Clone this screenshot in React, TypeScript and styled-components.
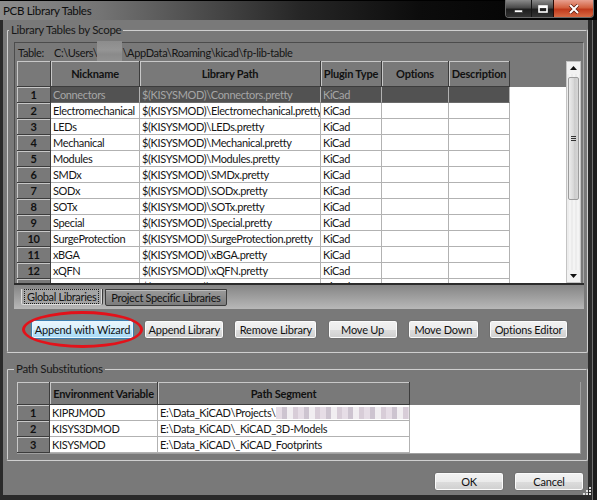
import React from "react";
import styled, { createGlobalStyle } from "styled-components";

const GlobalStyle = createGlobalStyle`
  html, body { margin: 0; padding: 0; }
  body {
    width: 597px; height: 500px; overflow: hidden; background: #1f1f1f;
    font-family: Lato, "Liberation Sans", "DejaVu Sans", sans-serif;
    font-size: 11px; letter-spacing: -0.35px; color: #111;
  }
  * { box-sizing: border-box; }
`;

const Window = styled.div`
  position: relative;
  width: 597px;
  height: 500px;
  display: flex;
  flex-direction: column;
  background: linear-gradient(90deg, #2a2a2a 0, #2a2a2a 592px, #707070 592px, #707070 593px, #1c1c1c 593px);
`;

const TitleBar = styled.div`
  flex: none;
  height: 20px;
  display: flex;
  justify-content: space-between;
  align-items: flex-start;
  padding: 0 3px;
  border-top: 1px solid #000;
  background: linear-gradient(90deg, #8c8c8c 0px, #747474 100px, #4c4c4c 200px, #262626 300px, #0c0c0c 420px, #000 597px);
`;

const TitleText = styled.div`
  font-size: 11.5px;
  letter-spacing: -0.3px;
  line-height: 19px;
  color: #0e0e0e;
`;

const WinBtns = styled.div`
  display: flex;
  height: 18px;
  margin-top: -1px;
  border: 1px solid #6a6a6a;
  border-top: none;
  border-radius: 0 0 4px 4px;
  overflow: hidden;
`;

const WinBtn = styled.div<{ $w: number; $close?: boolean }>`
  width: ${(p) => p.$w}px;
  display: flex;
  align-items: center;
  justify-content: center;
  border-left: ${(p) => (p.$close ? "1px solid #2a0a04" : "1px solid #151515")};
  background: ${(p) =>
    p.$close
      ? "linear-gradient(#e8a090 0%, #d2603f 45%, #c03a1c 55%, #d86a44 100%)"
      : "linear-gradient(#8a8a8a 0%, #4a4a4a 45%, #1e1e1e 55%, #333 100%)"};
  &:first-child { border-left: none; }
`;

const Client = styled.div`
  flex: 1;
  display: flex;
  flex-direction: column;
  margin: 0 9px 5px 3px;
  padding: 3px 0 0 3px;
  background: #797979;
`;

const Group = styled.fieldset<{ $mt?: number }>`
  margin: ${(p) => p.$mt ?? 0}px 0 0 0;
  padding: 0;
  min-width: 0;
  border: 2px groove #cfcfcf;
  border-radius: 2px;
`;

const Legend = styled.legend<{ $indent: number }>`
  margin-left: ${(p) => p.$indent}px;
  padding: 0 2px;
  line-height: 14px;
  font-size: 11.5px;
  letter-spacing: -0.3px;
  color: #181818;
`;

const GroupBody = styled.div<{ $pad: string }>`
  display: flex;
  flex-direction: column;
  padding: ${(p) => p.$pad};
`;

const Page = styled.div`
  display: flex;
  flex-direction: column;
  border-top: 1px solid #4c4c4c;
  border-left: 1px solid #4c4c4c;
  border-right: 1px solid #a8a8a8;
  padding: 0 2px;
`;

const TableLine = styled.div`
  height: 18px;
  display: flex;
  align-items: center;
  padding-left: 1px;
  white-space: nowrap;
  color: #141414;
`;

const TableLabel = styled.span`
  margin-right: 10px;
`;

const Smudge = styled.span<{ $w: number; $h: number; $tint?: boolean }>`
  display: inline-block;
  flex: none;
  width: ${(p) => p.$w}px;
  height: ${(p) => p.$h}px;
  background: ${(p) =>
    p.$tint
      ? "repeating-linear-gradient(90deg, #e6dde6 0 6px, #cdc4d0 6px 11px, #f1eef1 11px 17px, #d8cdd8 17px 22px)"
      : "linear-gradient(#8c8c8c, #959595 40%, #8a8a8a 60%, #929292)"};
`;

const GridWrap = styled.div`
  height: 222px;
  display: flex;
  overflow: hidden;
`;

const GridMain = styled.div`
  flex: 1;
  display: flex;
  flex-direction: column;
  overflow: hidden;
  background: #fff;
`;

const Row = styled.div<{ $h: number }>`
  flex: none;
  height: ${(p) => p.$h}px;
  display: flex;
`;

const HeadCell = styled.div<{ $w?: number }>`
  flex: ${(p) => (p.$w ? `0 0 ${p.$w}px` : "1 1 auto")};
  display: flex;
  align-items: center;
  justify-content: center;
  background: #797979;
  border-right: 1px solid #3c3c3c;
  border-bottom: 1px solid #3c3c3c;
  box-shadow: inset 1px 1px 0 #c8c8c8;
  font-weight: 700;
  letter-spacing: -0.2px;
  color: #111;
  white-space: nowrap;
`;

const HeadFill = styled.div`
  flex: 1 1 auto;
  background: #797979;
`;

const RowLabel = styled.div<{ $w: number }>`
  flex: 0 0 ${(p) => p.$w}px;
  display: flex;
  align-items: center;
  justify-content: center;
  background: #797979;
  border-right: 1px solid #3c3c3c;
  border-bottom: 1px solid #3c3c3c;
  box-shadow: inset 1px 1px 0 #c8c8c8;
  font-weight: 700;
  color: #111;
`;

const Cell = styled.div<{ $w: number; $sel?: boolean }>`
  flex: 0 0 ${(p) => p.$w}px;
  display: flex;
  align-items: center;
  padding: 0 2px;
  white-space: nowrap;
  overflow: hidden;
  background: ${(p) => (p.$sel ? "#525252" : "#fff")};
  color: ${(p) => (p.$sel ? "#a6a6a6" : "#161616")};
  border-right: 1px solid #b2b2b2;
  border-bottom: 1px solid ${(p) => (p.$sel ? "#6a6a6a" : "#b2b2b2")};
`;

const BodyFill = styled.div`
  flex: 1 1 auto;
  background: #fff;
`;

const VScroll = styled.div`
  flex: 0 0 15px;
  display: flex;
  flex-direction: column;
  background: repeating-linear-gradient(90deg, #ececec 0 2px, #f4f4f4 2px 4px);
  border: 1px solid #c4c4c4;
`;

const ArrowBtn = styled.div`
  flex: none;
  height: 12px;
  display: flex;
  align-items: center;
  justify-content: center;
  background: #f2f2f2;
`;

const Thumb = styled.div`
  flex: none;
  height: 123px;
  margin: 3px 1px 0;
  display: flex;
  align-items: center;
  justify-content: center;
  border: 1px solid #9c9c9c;
  border-radius: 2px;
  background: linear-gradient(90deg, #ececec, #d8d8d8 50%, #cacaca 51%, #d6d6d6);
`;

const Track = styled.div`
  flex: 1;
`;

const TabStrip = styled.div`
  height: 26px;
  display: flex;
  align-items: flex-start;
  gap: 3px;
  padding: 4px 0 0 7px;
  border-top: 2px solid #2c2c2c;
  background: linear-gradient(#858585, #b8b8b8);
`;

const Tab = styled.div<{ $active?: boolean }>`
  height: ${(p) => (p.$active ? 16 : 17)}px;
  display: flex;
  align-items: center;
  padding: 0 3px;
  white-space: nowrap;
  color: #111;
  background: ${(p) => (p.$active ? "#a4a4a4" : "linear-gradient(#9a9a9a, #7c7c7c)")};
  border: 1px solid ${(p) => (p.$active ? "#dcdcdc" : "#3a3a3a")};
  border-top: ${(p) => (p.$active ? "none" : "1px solid #3a3a3a")};
  border-radius: 0 0 2px 2px;
  box-shadow: ${(p) => (p.$active ? "1px 0 0 #3a3a3a" : "inset 0 1px 0 #bdbdbd")};
`;

const TabLabel = styled.span<{ $focus?: boolean }>`
  padding: 0 2px;
  outline: ${(p) => (p.$focus ? "1px dotted #1a1a1a" : "none")};
  line-height: 13px;
`;

const ButtonRow = styled.div`
  display: flex;
  justify-content: space-between;
  margin-top: 11px;
  padding: 0 16px 0 17px;
`;

const Btn = styled.button<{ $w: number; $hot?: boolean }>`
  width: ${(p) => p.$w}px;
  height: 19px;
  padding: 0;
  font-family: inherit;
  font-size: 11px;
  letter-spacing: -0.2px;
  color: #111;
  border-radius: 3px;
  border: 1px solid ${(p) => (p.$hot ? "#3c7fb1" : "#707070")};
  box-shadow: inset 0 0 0 1px ${(p) => (p.$hot ? "#e8f6fd" : "#fbfbfb")};
  background: ${(p) =>
    p.$hot
      ? "linear-gradient(#eaf6fd 0%, #d9f0fc 50%, #bee6fd 51%, #a7d9f5 100%)"
      : "linear-gradient(#f2f2f2 0%, #ebebeb 50%, #dddddd 51%, #cfcfcf 100%)"};
`;

const Hilite = styled.div`
  position: relative;
  display: flex;
`;

const RedEllipse = styled.span`
  position: absolute;
  left: -9px;
  top: -9px;
  width: 121px;
  height: 37px;
  border: 3px solid #e3121a;
  border-radius: 50%;
  pointer-events: none;
`;

const EnvGrid = styled.div`
  display: flex;
  flex-direction: column;
  border-right: 1px solid #a0a0a0;
  border-bottom: 1px solid #a0a0a0;
`;

const Footer = styled.div`
  display: flex;
  justify-content: flex-end;
  gap: 10px;
  margin-top: 11px;
  padding-right: 4px;
`;

const Grip = styled.svg`
  position: absolute;
  right: 6px;
  bottom: 5px;
`;

const libs = [
  "Connectors",
  "Electromechanical",
  "LEDs",
  "Mechanical",
  "Modules",
  "SMDx",
  "SODx",
  "SOTx",
  "Special",
  "SurgeProtection",
  "xBGA",
  "xQFN",
  "xQFP",
];

const cols = [89, 181, 61, 67, 61];

const envRows = [
  { name: "KIPRJMOD", path: "E:\\Data_KiCAD\\Projects\\", smudge: true },
  { name: "KISYS3DMOD", path: "E:\\Data_KiCAD\\_KiCAD_3D-Models" },
  { name: "KISYSMOD", path: "E:\\Data_KiCAD\\_KiCAD_Footprints" },
];

const UpArrow = () => (
  <svg width="7" height="4" viewBox="0 0 7 4">
    <path d="M0 4 L3.5 0 L7 4 Z" fill="#111" />
  </svg>
);
const DownArrow = () => (
  <svg width="7" height="4" viewBox="0 0 7 4">
    <path d="M0 0 L3.5 4 L7 0 Z" fill="#111" />
  </svg>
);

export default function App() {
  return (
    <Window>
      <GlobalStyle />
      <TitleBar>
        <TitleText>PCB Library Tables</TitleText>
        <WinBtns>
          <WinBtn $w={25}>
            <svg width="9" height="8" viewBox="0 0 9 8">
              <rect x="0.5" y="5" width="8" height="2.5" fill="#fff" stroke="#222" strokeWidth="0.6" />
            </svg>
          </WinBtn>
          <WinBtn $w={22}>
            <svg width="10" height="8" viewBox="0 0 10 8">
              <rect x="1" y="1" width="8" height="6" fill="none" stroke="#fff" strokeWidth="1.6" />
              <rect x="1" y="1" width="8" height="2" fill="#fff" />
            </svg>
          </WinBtn>
          <WinBtn $w={40} $close>
            <svg width="12" height="10" viewBox="0 0 12 10">
              <path d="M2 1 L10 9 M10 1 L2 9" stroke="#5a1a0e" strokeWidth="3.4" />
              <path d="M2 1 L10 9 M10 1 L2 9" stroke="#fff" strokeWidth="2" />
            </svg>
          </WinBtn>
        </WinBtns>
      </TitleBar>

      <Client>
        <Group>
          <Legend $indent={1}>Library Tables by Scope</Legend>
          <GroupBody $pad="5px 2px 12px 6px">
            <Page>
              <TableLine>
                <TableLabel>Table:</TableLabel>
                <span>{"C:\\Users\\"}</span>
                <Smudge $w={25} $h={22} />
                <span>{"\\AppData\\Roaming\\kicad\\fp-lib-table"}</span>
              </TableLine>
              <GridWrap>
                <GridMain>
                  <Row $h={26}>
                    <HeadCell $w={34} />
                    <HeadCell $w={89}>Nickname</HeadCell>
                    <HeadCell $w={181}>Library Path</HeadCell>
                    <HeadCell $w={61}>Plugin Type</HeadCell>
                    <HeadCell $w={67}>Options</HeadCell>
                    <HeadCell $w={61}>Description</HeadCell>
                    <HeadFill />
                  </Row>
                  {libs.map((n, i) => (
                    <Row $h={16} key={n}>
                      <RowLabel $w={34}>{i + 1}</RowLabel>
                      <Cell $w={cols[0]} $sel={i === 0}>{n}</Cell>
                      <Cell $w={cols[1]} $sel={i === 0}>{`$(KISYSMOD)\\${n}.pretty`}</Cell>
                      <Cell $w={cols[2]} $sel={i === 0}>KiCad</Cell>
                      <Cell $w={cols[3]} $sel={i === 0} />
                      <Cell $w={cols[4]} $sel={i === 0} />
                      <BodyFill />
                    </Row>
                  ))}
                </GridMain>
                <VScroll>
                  <ArrowBtn>
                    <UpArrow />
                  </ArrowBtn>
                  <Thumb>
                    <svg width="5" height="5" viewBox="0 0 5 5">
                      <path d="M0 0.5 H5 M0 2.5 H5 M0 4.5 H5" stroke="#333" strokeWidth="1" />
                    </svg>
                  </Thumb>
                  <Track />
                  <ArrowBtn>
                    <DownArrow />
                  </ArrowBtn>
                </VScroll>
              </GridWrap>
            </Page>
            <TabStrip>
              <Tab $active>
                <TabLabel $focus>Global Libraries</TabLabel>
              </Tab>
              <Tab>
                <TabLabel>Project Specific Libraries</TabLabel>
              </Tab>
            </TabStrip>
            <ButtonRow>
              <Hilite>
                <Btn $w={103} $hot>Append with Wizard</Btn>
                <RedEllipse />
              </Hilite>
              <Btn $w={80}>Append Library</Btn>
              <Btn $w={83}>Remove Library</Btn>
              <Btn $w={70}>Move Up</Btn>
              <Btn $w={71}>Move Down</Btn>
              <Btn $w={79}>Options Editor</Btn>
            </ButtonRow>
          </GroupBody>
        </Group>

        <Group $mt={9}>
          <Legend $indent={6}>Path Substitutions</Legend>
          <GroupBody $pad="6px 5px 5px 9px">
            <EnvGrid>
              <Row $h={23}>
                <HeadCell $w={33} />
                <HeadCell $w={108}>Environment Variable</HeadCell>
                <HeadCell $w={252}>Path Segment</HeadCell>
                <HeadFill />
              </Row>
              {envRows.map((r, i) => (
                <Row $h={16} key={r.name}>
                  <RowLabel $w={33}>{i + 1}</RowLabel>
                  <Cell $w={108}>{r.name}</Cell>
                  <Cell $w={252}>
                    {r.path}
                    {r.smudge && <Smudge $w={140} $h={12} $tint />}
                  </Cell>
                  <BodyFill />
                </Row>
              ))}
            </EnvGrid>
          </GroupBody>
        </Group>

        <Footer>
          <Btn $w={70}>OK</Btn>
          <Btn $w={70}>Cancel</Btn>
        </Footer>
      </Client>

      <Grip width="8" height="8" viewBox="0 0 8 8">
        {[
          [6, 0],
          [6, 3],
          [3, 3],
          [6, 6],
          [3, 6],
          [0, 6],
        ].map(([x, y]) => (
          <rect key={`${x}-${y}`} x={x} y={y} width="2" height="2" fill="#e0e0e0" />
        ))}
      </Grip>
    </Window>
  );
}
